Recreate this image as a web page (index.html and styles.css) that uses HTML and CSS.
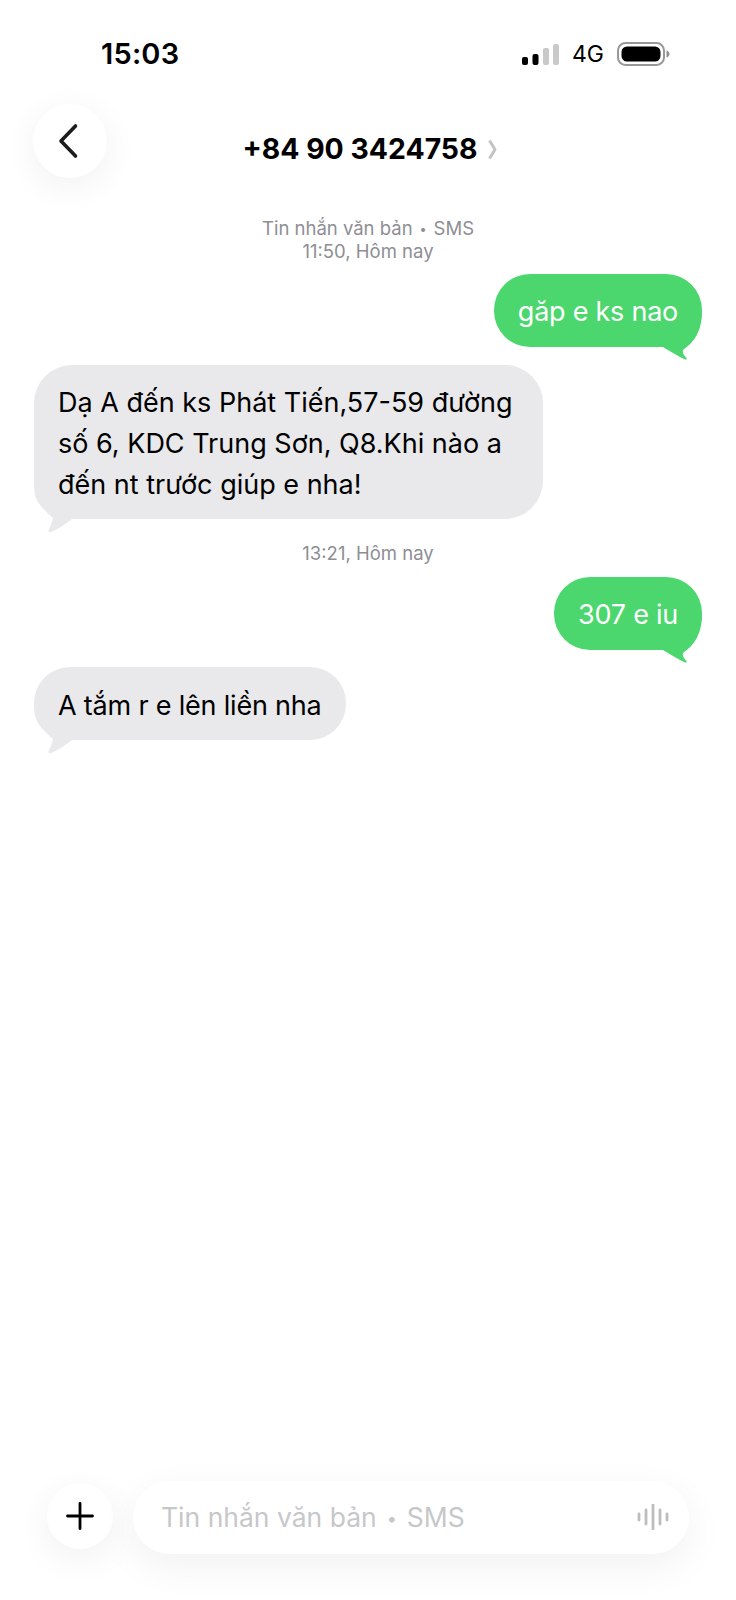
FILE: index.html
```html
<!DOCTYPE html>
<html lang="vi">
<head>
<meta charset="utf-8">
<title>+84 90 3424758</title>
<link rel="stylesheet" href="styles.css">
</head>
<body>
<div class="screen">
  <div class="status">
    <span class="time">15:03</span>
    <div class="status-right">
      <svg class="signal" width="37" height="24" viewBox="0 0 37 24">
        <rect x="0" y="15" width="6" height="8" rx="2" fill="#000"/>
        <rect x="10.500" y="12" width="6" height="11" rx="2" fill="#000"/>
        <rect x="21" y="6" width="6" height="17" rx="2" fill="#c9c9c9"/>
        <rect x="31" y="2" width="6" height="21" rx="2" fill="#c9c9c9"/>
      </svg>
      <span class="net">4G</span>
      <svg class="battery" width="53" height="24" viewBox="0 0 53 24">
        <rect x="1" y="1" width="46" height="22" rx="7.500" fill="none" stroke="#989898" stroke-width="2"/>
        <rect x="4.500" y="4.500" width="39" height="15" rx="5.500" fill="#000"/>
        <path d="M49.500 8.500c2 .6 3 2 3 3.500s-1 2.900-3 3.500z" fill="#8f8f8f"/>
      </svg>
    </div>
  </div>

  <header class="nav">
    <button class="back" aria-label="Quay lại">
      <svg width="24" height="36" viewBox="0 0 24 36"><path d="M19.500 3 5 18l14.500 15" fill="none" stroke="#1c1c1e" stroke-width="3.600" stroke-linecap="round" stroke-linejoin="round"/></svg>
    </button>
    <div class="title">
      <span>+84 90 3424758</span>
      <svg width="11" height="21" viewBox="0 0 11 21"><path d="M2.500 1.500 8 10.500l-5.500 9" fill="none" stroke="#c4c4c4" stroke-width="3" stroke-linejoin="round"/></svg>
    </div>
  </header>

  <main class="thread">
    <div class="stamp first">Tin nhắn văn bản <span class="dot">•</span> SMS<br>11:50, Hôm nay</div>
    <div class="bubble out b1">
      <svg class="tail tail-out" width="42" height="51" viewBox="0 0 42 51"><path d="M0 36H3C10 40 18 45 24 48C27 49.500 27.500 47.500 25.500 46C23 43 22.500 41 23 39C31 33 42 24 42 0H0Z" fill="#4bd76d"/></svg>
      <span class="text">găp e ks nao</span>
    </div>
    <div class="bubble in b2">
      <svg class="tail tail-in" width="40" height="53" viewBox="0 0 40 53"><path d="M0 0C0 9 1 16 3 19C5 24 11 30 19 37C18 42 16 46 14.500 49.500C14 51.500 16 51.500 18 50.500C25 48 31 43 38 38V0Z" fill="#e9e9eb"/></svg>
      <span class="text">Dạ A đến ks Phát Tiến,57-59 đường<br>số 6, KDC Trung Sơn, Q8.Khi nào a<br>đến nt trước giúp e nha!</span>
    </div>
    <div class="stamp mid">13:21, Hôm nay</div>
    <div class="bubble out b3">
      <svg class="tail tail-out" width="42" height="51" viewBox="0 0 42 51"><path d="M0 36H3C10 40 18 45 24 48C27 49.500 27.500 47.500 25.500 46C23 43 22.500 41 23 39C31 33 42 24 42 0H0Z" fill="#4bd76d"/></svg>
      <span class="text">307 e iu</span>
    </div>
    <div class="bubble in b4">
      <svg class="tail tail-in" width="40" height="53" viewBox="0 0 40 53"><path d="M0 0C0 9 1 16 3 19C5 24 11 30 19 37C18 42 16 46 14.500 49.500C14 51.500 16 51.500 18 50.500C25 48 31 43 38 38V0Z" fill="#e9e9eb"/></svg>
      <span class="text">A tắm r e lên liền nha</span>
    </div>
  </main>

  <footer class="composer">
    <button class="plus" aria-label="Thêm">
      <svg width="28" height="28" viewBox="0 0 28 28"><path d="M14 1.500v25M1.500 14h25" stroke="#000" stroke-width="2.800" stroke-linecap="round" fill="none"/></svg>
    </button>
    <div class="input">
      <span class="placeholder">Tin nhắn văn bản <span class="dot">•</span> SMS</span>
      <svg class="wave" width="32" height="26" viewBox="0 0 32 26"><path d="M2 10v6M9 6v14M16 1v24M23 6v14M30 10v6" stroke="#bdbdbd" stroke-width="2.800" stroke-linecap="round" fill="none"/></svg>
    </div>
  </footer>
</div>
</body>
</html>
```
FILE: styles.css
```css
* { box-sizing: border-box; }
html, body { margin: 0; padding: 0; background: #fff; }
body { font-family: Inter, "Liberation Sans", sans-serif; color: #000; }
.screen { width: 736px; height: 1600px; display: flex; flex-direction: column; overflow: hidden; background: #fff; }

.status { height: 74px; padding: 36px 66px 0 101px; display: flex; justify-content: space-between; align-items: flex-start; flex: none; }
.time { font-size: 29px; font-weight: 600; line-height: 36px; letter-spacing: .2px; }
.status-right { display: flex; align-items: center; gap: 13px; height: 36px; }
.net { font-size: 23px; font-weight: 400; line-height: 24px; }

.nav { height: 116px; flex: none; position: relative; display: flex; justify-content: center; }
.back { position: absolute; left: 33px; top: 30px; width: 74px; height: 74px; border: 0; border-radius: 50%; background: #fff; box-shadow: 0 8px 36px rgba(0,0,0,.06); display: flex; align-items: center; justify-content: center; padding: 0 5px 0 0; }
.title { margin-top: 57px; height: 36px; display: flex; align-items: center; gap: 9px; font-size: 28.400px; font-weight: 700; line-height: 36px; padding-left: 4px; }

.thread { flex: 1; display: flex; flex-direction: column; padding: 0 34px; }
.stamp { text-align: center; font-size: 18.500px; line-height: 23px; color: #8e8e93; }
.stamp.first { margin-top: 27px; }
.stamp.mid { margin-top: 23px; }
.dot { font-size: .68em; line-height: 0; padding: 0 .14em; vertical-align: .1em; }
.bubble { position: relative; font-size: 27px; line-height: 40px; border-radius: 36px; }
.text { position: relative; display: block; }
.bubble.out { align-self: flex-end; background: #4bd76d; color: #fff; height: 73px; padding: 18px 24px 0; }
.bubble.in { align-self: flex-start; background: #e9e9eb; color: #000; padding: 18px 24px 0; }
.b1 { margin-top: 11px; letter-spacing: -.25px; }
.bubble.b2 { margin-top: 18px; height: 154px; border-radius: 38px; line-height: 41px; padding-top: 17px; padding-right: 30px; }
.b3 { margin-top: 12px; letter-spacing: -.25px; }
.bubble.b4 { margin-top: 17px; height: 73px; letter-spacing: -.2px; padding-top: 19px; }
.tail { position: absolute; display: block; pointer-events: none; }
.tail-out { right: 0; bottom: -15px; }
.tail-in { left: 0; bottom: -15px; }

.composer { flex: none; height: 119px; padding: 0 47px; display: flex; align-items: flex-start; gap: 20px; }
.plus { width: 66px; height: 66px; margin-top: 2px; border: 0; padding: 0; border-radius: 50%; background: #fff; box-shadow: 0 10px 36px rgba(0,0,0,.06); display: flex; align-items: center; justify-content: center; flex: none; }
.input { flex: 1; height: 73px; border-radius: 37px; background: #fff; box-shadow: 0 12px 40px rgba(0,0,0,.06); display: flex; align-items: center; justify-content: space-between; padding: 0 20px 2px 28px; }
.placeholder { font-size: 26.500px; line-height: 40px; color: #c7c7c9; }
```
